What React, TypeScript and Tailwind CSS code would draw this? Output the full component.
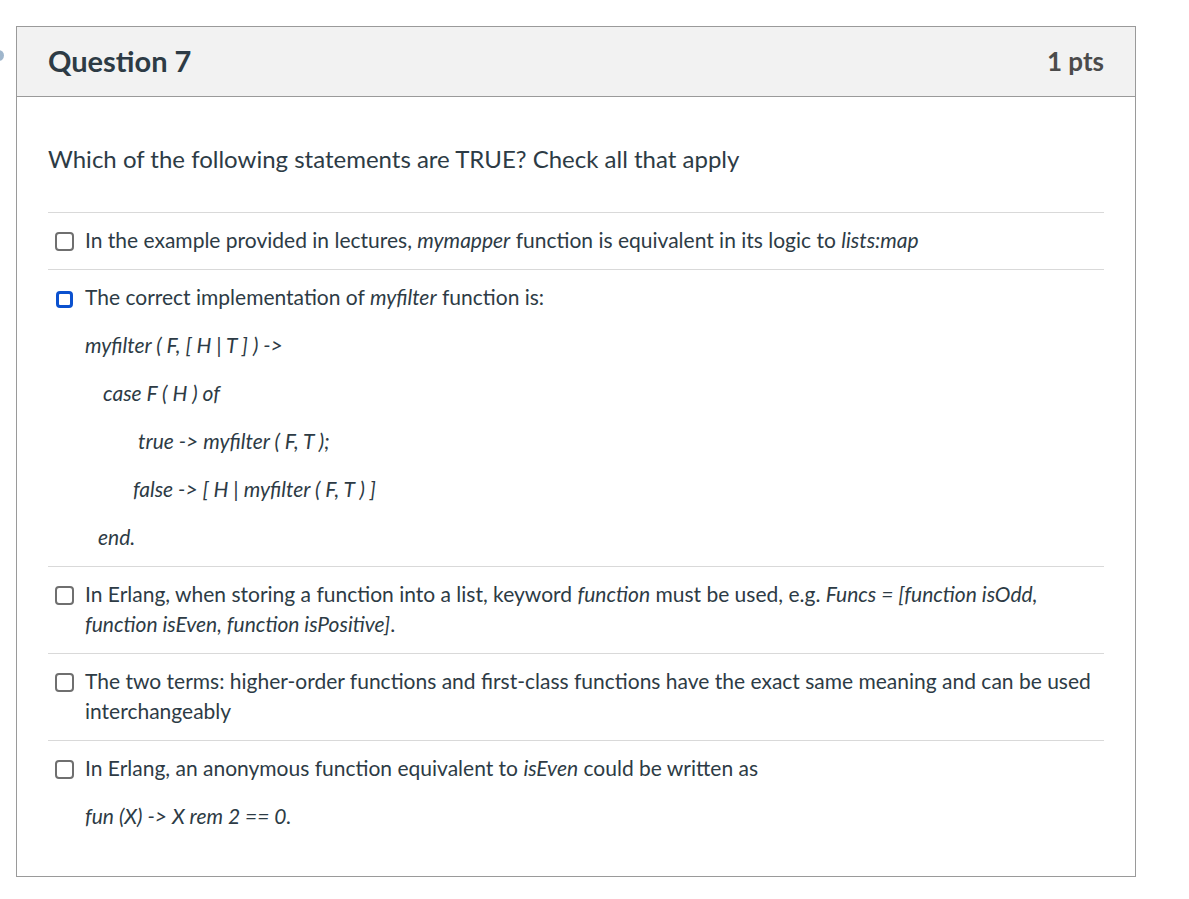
import React from "react";

type Answer = {
  key: string;
  focused?: boolean;
  body: React.ReactNode;
};

function Box({ focused }: { focused?: boolean }) {
  if (focused) {
    return (
      <span className="mt-[9px] ml-[1px] mr-[12px] block h-[17px] w-[17px] shrink-0 rounded-[4px] border-[3px] border-[#0b51cf] bg-white" />
    );
  }
  return (
    <span className="mt-[7px] mr-[11px] block h-[19px] w-[19px] shrink-0 rounded-[4px] border-2 border-[#6f6f6f] bg-white" />
  );
}

const answers: Answer[] = [
  {
    key: "a1",
    body: (
      <p>
        In the example provided in lectures, <em>mymapper</em> function is equivalent in its logic to{" "}
        <em>lists:map</em>
      </p>
    ),
  },
  {
    key: "a2",
    focused: true,
    body: (
      <div className="flex flex-col gap-[18px]">
        <p>
          The correct implementation of <em>myfilter</em> function is:
        </p>
        <p>
          <em>myfilter ( F, [ H | T ] ) -&gt;</em>
        </p>
        <p className="pl-[18px]">
          <em>case F ( H ) of</em>
        </p>
        <p className="pl-[53px]">
          <em>true -&gt; myfilter ( F, T );</em>
        </p>
        <p className="pl-[48px]">
          <em>false -&gt; [ H | myfilter ( F, T ) ]</em>
        </p>
        <p className="pl-[13px]">
          <em>end.</em>
        </p>
      </div>
    ),
  },
  {
    key: "a3",
    body: (
      <p>
        In Erlang, when storing a function into a list, keyword <em>function</em> must be used, e.g.{" "}
        <em>Funcs = [function isOdd, function isEven, function isPositive]</em>.
      </p>
    ),
  },
  {
    key: "a4",
    body: (
      <p>
        The two terms: higher-order functions and first-class functions have the exact same meaning and can be used
        interchangeably
      </p>
    ),
  },
  {
    key: "a5",
    body: (
      <div className="flex flex-col gap-[18px]">
        <p>
          In Erlang, an anonymous function equivalent to <em>isEven</em> could be written as
        </p>
        <p>
          <em>fun (X) -&gt; X rem 2 == 0.</em>
        </p>
      </div>
    ),
  },
];

export default function App() {
  return (
    <div className="relative min-h-[899px] w-[1189px] bg-white pt-[26px] pl-[16px] font-['Lato','Noto_Sans',sans-serif] text-[#2d3b45]">
      {/* edge of the previous-question marker */}
      <span className="absolute left-[-7px] top-[50px] block h-[11px] w-[11px] rounded-full bg-[#9fb6cc]" />

      <div className="w-[1120px] border border-[#9a9a9a]">
        <div className="flex h-[70px] items-center justify-between border-b border-[#9a9a9a] bg-[#f2f2f2] pb-[2px] pl-[31px] pr-[31px]">
          <h2 className="text-[29px] font-bold leading-none">Question 7</h2>
          <span className="text-[26px] font-bold leading-none text-[#4b4b4b]">1 pts</span>
        </div>

        <div className="px-[31px] pb-[44px] pt-[47px]">
          <p className="text-[24px] leading-[30px]">Which of the following statements are TRUE? Check all that apply</p>

          <div className="mt-[38px]">
            {answers.map((a, i) => (
              <div
                key={a.key}
                className={
                  "flex border-t border-[#d9d9d9] pl-[7px] pr-[8px] pt-[12px] text-[21px] leading-[30px] " +
                  (i === answers.length - 1 ? "pb-[1px]" : "pb-[14px]")
                }
              >
                <Box focused={a.focused} />
                <div className="min-w-0 flex-1">{a.body}</div>
              </div>
            ))}
          </div>
        </div>
      </div>
    </div>
  );
}
